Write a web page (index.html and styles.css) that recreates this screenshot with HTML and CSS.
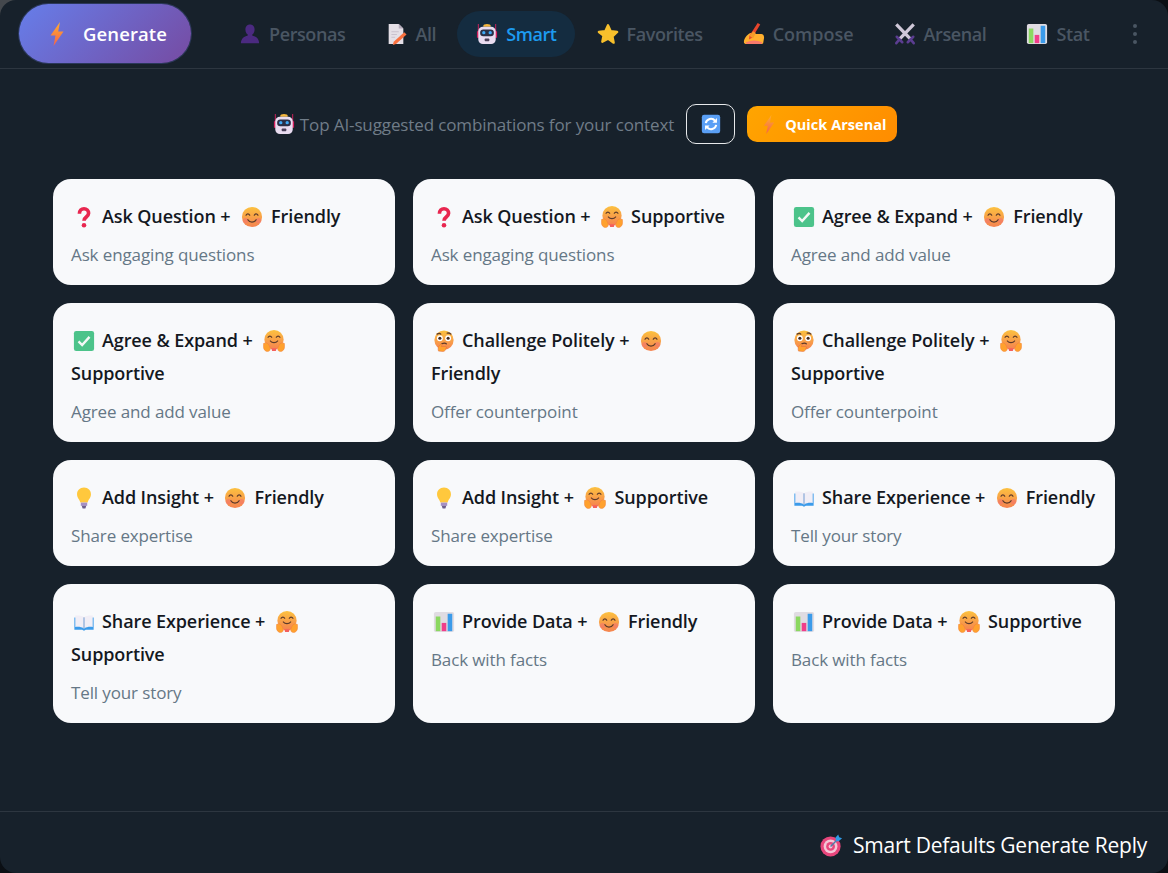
FILE: index.html
```html
<!DOCTYPE html>
<html lang="en">
<head>
<meta charset="utf-8">
<title>Smart</title>
<link rel="stylesheet" href="styles.css">
</head>
<body>
<svg class="defs" width="0" height="0" aria-hidden="true">
<defs>
<linearGradient id="gBolt" x1="0" y1="0" x2="0" y2="1"><stop offset="0" stop-color="#ffb02e"/><stop offset="1" stop-color="#f4604c"/></linearGradient>
<linearGradient id="gFace" x1="0" y1="0" x2="0" y2="1"><stop offset="0" stop-color="#fcc13f"/><stop offset="1" stop-color="#f58350"/></linearGradient>
<symbol id="bolt" viewBox="0 0 16 24"><path fill="url(#gBolt)" d="M11 0 1.500 13.500h5L4.500 24 14.500 9.500H9.200z"/></symbol>
<symbol id="person" viewBox="0 0 24 24"><path fill="#4b2a80" d="M12 1.500c3.300 0 5 2.500 5 5.500 0 2.600-1 4.400-2.400 5.400v1.400c3.600.8 6.900 2.600 7.400 8.200H2c.5-5.600 3.800-7.400 7.400-8.200v-1.400C8 11.400 7 9.600 7 7c0-3 1.700-5.500 5-5.500z"/></symbol>
<symbol id="memo" viewBox="0 0 24 24"><path fill="#e4dfe6" d="M4 1h11l5 5v17H4z"/><path fill="#b5abbb" d="m15 1 5 5h-5z"/><path fill="#c9c1cd" d="M7 9h8v1H7zm0 3h6v1H7zm0 3h4v1H7z"/><path fill="#f9703e" d="m21 10 2.500 2.500L12 23l-3.500 1 1-3.500z"/></symbol>
<symbol id="robot" viewBox="0 0 24 24"><path fill="#d6205f" d="M2 1h1v8H2zm19 0h1v8h-1z"/><path fill="#d6205f" d="M1 9h3v7H1zm19 0h3v7h-3z"/><path fill="#f6b73c" d="M8 3a4 2 0 0 1 8 0v1H8z"/><rect x="2.500" y="4" width="19" height="19" rx="5" fill="#e9dcf0"/><rect x="4.500" y="7" width="15" height="7.500" rx="3.500" fill="#2a2f45"/><circle cx="8.500" cy="10.500" r="1.800" fill="#3fa9f5"/><circle cx="15.500" cy="10.500" r="1.800" fill="#3fa9f5"/><rect x="9.500" y="17" width="5" height="2.800" rx=".8" fill="#4a3f58"/></symbol>
<symbol id="star" viewBox="0 0 24 24"><path fill="#f8c02c" stroke="#f8c02c" stroke-width="2.500" stroke-linejoin="round" d="m12 2.500 3 6.400 7 .9-5.100 4.800 1.300 6.900L12 17.100l-6.200 3.400 1.300-6.900L2 9.800l7-.9z"/></symbol>
<symbol id="hand" viewBox="0 0 24 24"><path fill="#ffb02e" d="M1 21c0-4 3-8 7-10l6 1h6c2 0 3 2 3 4l-1 6c-1 1-2 1-3 1H4c-2 0-3-1-3-2z"/><path fill="#f8796b" d="M3 21c3-1 6-2 9-2 3 0 6 1 9 2l-1 2H5c-1 0-2-1-2-2z"/><path fill="#e8452c" d="m16 0 2.800 1.700L10 16l-3.500 2 .5-4z"/><path fill="#f49a2a" d="m7 14 4-5 3 2-3 6z"/></symbol>
<symbol id="swords" viewBox="0 0 24 24"><path fill="none" stroke="#cfc8d8" stroke-width="3.600" d="m2.500 1.500 15 15.500M21.500 1.500 6.500 17"/><path fill="none" stroke="#5b3d91" stroke-width="2.800" stroke-linecap="round" d="m3 15 6 6M21 15l-6 6M5.500 18.500 2.500 22M18.500 18.500l3 3.500"/></symbol>
<symbol id="chart" viewBox="0 0 24 24"><rect x="1" y="1" width="22" height="22" rx="2" fill="#e0dce2"/><rect x="3" y="6" width="5" height="16" fill="#8bd860"/><rect x="9.500" y="13" width="5" height="9" fill="#f03e8a"/><rect x="16" y="3" width="5" height="19" fill="#3b9bea"/></symbol>
<symbol id="refresh" viewBox="0 0 24 24"><rect x="2" y="2" width="20" height="20" rx="2.500" fill="#5a9ff5"/><path fill="none" stroke="#fff" stroke-width="2.200" d="M6.300 11a5.800 5.800 0 0 1 10.200-2.500M17.700 13a5.800 5.800 0 0 1-10.200 2.500"/><path fill="#fff" d="M18.500 5.500v5h-5zM5.500 18.500v-5h5z"/></symbol>
<symbol id="question" viewBox="0 0 24 24"><path fill="none" stroke="#e8264f" stroke-width="4" d="M7 8.500C7 5 9.200 3 12 3s5 2 5 5c0 4-5 4-5 8"/><circle cx="12" cy="21" r="2.500" fill="#e8264f"/></symbol>
<symbol id="smile" viewBox="0 0 24 24"><circle cx="12" cy="12" r="11" fill="url(#gFace)"/><circle cx="5" cy="16" r="3" fill="#f4766c" opacity=".6"/><circle cx="19" cy="16" r="3" fill="#f4766c" opacity=".6"/><path fill="none" stroke="#5c3a2a" stroke-width="1.400" stroke-linecap="round" d="M5.500 10c1-2 3-2 4 0m5 0c1-2 3-2 4 0M7.500 15c2 3.500 7 3.500 9 0"/></symbol>
<symbol id="hug" viewBox="0 0 24 24"><circle cx="12" cy="10.500" r="10.500" fill="url(#gFace)"/><path fill="none" stroke="#5c3a2a" stroke-width="1.300" stroke-linecap="round" d="M5.500 8c1-1.800 3-1.800 4 0m5 0c1-1.800 3-1.800 4 0M8 12c2 2.500 6 2.500 8 0"/><path fill="#ffa12e" stroke="#f2803a" stroke-width=".5" d="M.5 15.500c0-1.500 1.500-1.500 2-.5l1-1c1 0 2.500 1.500 3.500 3.500l1 3c0 2-1.500 3-3 3-2.500 0-4.500-2.500-4.500-5zm23 0c0-1.500-1.500-1.500-2-.5l-1-1c-1 0-2.500 1.500-3.500 3.500l-1 3c0 2 1.500 3 3 3 2.500 0 4.500-2.500 4.500-5z"/><path fill="#f4605c" d="M9 20h6l-1 3h-4z"/></symbol>
<symbol id="check" viewBox="0 0 24 24"><rect x="1" y="1" width="22" height="22" rx="2.500" fill="#4cc38a"/><path fill="none" stroke="#f3f8f6" stroke-width="2.600" d="m6 12.500 4 4 8-9"/></symbol>
<symbol id="think" viewBox="0 0 24 24"><circle cx="12" cy="11" r="10.500" fill="url(#gFace)"/><circle cx="7.500" cy="9" r="3.200" fill="#fff"/><circle cx="16.500" cy="9" r="3.200" fill="#fff"/><circle cx="7.500" cy="9" r="1.700" fill="#40281f"/><circle cx="16.500" cy="9" r="1.700" fill="#40281f"/><path fill="none" stroke="#5c3a2a" stroke-width="1.400" stroke-linecap="round" d="M4.500 4.500c1.500-1 3-1 4 0m7-1c1.500-.5 3 0 4 1M9.500 15c2-.8 4-.8 5 0"/><path fill="#ffa12e" stroke="#e8703c" stroke-width=".6" d="M6 23c-1-3 0-5 1-6l2-2 1 1-1 2h5c1 0 1 2 0 2 0 2-1 3-3 3.500z"/></symbol>
<symbol id="bulb" viewBox="0 0 24 24"><path fill="#ffc83d" d="M12 .5c4.600 0 7.600 3.200 7.600 7.300 0 4-3 5.700-3.600 9.200H8c-.6-3.500-3.600-5.200-3.600-9.200C4.400 3.700 7.400.5 12 .5z"/><rect x="8.500" y="17" width="7" height="3.500" fill="#a58fc4"/><path fill="#6d5f8c" d="M9.500 20.500h5l-1 3h-3z"/></symbol>
<symbol id="book" viewBox="0 0 24 24"><path fill="#3b9bea" d="M1.500 7h21v13.500H14l-2 1-2-1H1.500z"/><path fill="#f1eef6" d="M2.500 5c3.500-.5 7 0 9 1.500V19c-2-1.500-5.500-2-9-1.500zm19 0c-3.500-.5-7 0-9 1.500V19c2-1.500 5.500-2 9-1.500z"/><path fill="#c9c2d6" d="M11.500 6.500h1V19h-1z"/></symbol>
<symbol id="target" viewBox="0 0 24 24"><circle cx="11" cy="13" r="10.500" fill="#e8467c"/><circle cx="11" cy="13" r="7.200" fill="#f4c6d6"/><circle cx="11" cy="13" r="4.600" fill="#e8467c"/><circle cx="11" cy="13" r="2" fill="#f4c6d6"/><path stroke="#4c7ea8" stroke-width="1.500" d="m11 13 9-9"/><path fill="#2f9ae6" d="m16 4 3-3.500 1 3 3 1-3.500 3H17z"/></symbol>
</defs>
</svg>

<div class="app">
  <header class="topbar">
    <button class="generate"><svg class="ico-bolt"><use href="#bolt"/></svg><span>Generate</span></button>
    <nav class="tabs">
      <a class="tab"><svg class="ico"><use href="#person"/></svg><span>Personas</span></a>
      <a class="tab"><svg class="ico"><use href="#memo"/></svg><span>All</span></a>
      <a class="tab active"><svg class="ico"><use href="#robot"/></svg><span>Smart</span></a>
      <a class="tab"><svg class="ico"><use href="#star"/></svg><span>Favorites</span></a>
      <a class="tab tab-wide"><svg class="ico"><use href="#hand"/></svg><span>Compose</span></a>
      <a class="tab"><svg class="ico"><use href="#swords"/></svg><span>Arsenal</span></a>
      <a class="tab"><svg class="ico"><use href="#chart"/></svg><span>Stat</span></a>
    </nav>
    <div class="kebab"><i></i><i></i><i></i></div>
  </header>

  <main class="content">
    <div class="hint">
      <svg class="ico"><use href="#robot"/></svg>
      <span class="hint-text">Top AI-suggested combinations for your context</span>
      <button class="refresh"><svg class="ico"><use href="#refresh"/></svg></button>
      <button class="quick"><svg class="ico-small"><use href="#bolt"/></svg><span>Quick Arsenal</span></button>
    </div>

    <section class="cards">
      <article class="card"><h3><svg class="em"><use href="#question"/></svg>Ask Question + <svg class="em"><use href="#smile"/></svg>Friendly</h3><p>Ask engaging questions</p></article>
      <article class="card"><h3><svg class="em"><use href="#question"/></svg>Ask Question + <svg class="em"><use href="#hug"/></svg>Supportive</h3><p>Ask engaging questions</p></article>
      <article class="card"><h3><svg class="em"><use href="#check"/></svg>Agree &amp; Expand + <svg class="em"><use href="#smile"/></svg>Friendly</h3><p>Agree and add value</p></article>
      <article class="card"><h3><svg class="em"><use href="#check"/></svg>Agree &amp; Expand + <svg class="em"><use href="#hug"/></svg>Supportive</h3><p>Agree and add value</p></article>
      <article class="card"><h3><svg class="em"><use href="#think"/></svg>Challenge Politely + <svg class="em"><use href="#smile"/></svg>Friendly</h3><p>Offer counterpoint</p></article>
      <article class="card"><h3><svg class="em"><use href="#think"/></svg>Challenge Politely + <svg class="em"><use href="#hug"/></svg>Supportive</h3><p>Offer counterpoint</p></article>
      <article class="card"><h3><svg class="em"><use href="#bulb"/></svg>Add Insight + <svg class="em"><use href="#smile"/></svg>Friendly</h3><p>Share expertise</p></article>
      <article class="card"><h3><svg class="em"><use href="#bulb"/></svg>Add Insight + <svg class="em"><use href="#hug"/></svg>Supportive</h3><p>Share expertise</p></article>
      <article class="card"><h3><svg class="em"><use href="#book"/></svg>Share Experience + <svg class="em"><use href="#smile"/></svg>Friendly</h3><p>Tell your story</p></article>
      <article class="card"><h3><svg class="em"><use href="#book"/></svg>Share Experience + <svg class="em"><use href="#hug"/></svg>Supportive</h3><p>Tell your story</p></article>
      <article class="card"><h3><svg class="em"><use href="#chart"/></svg>Provide Data + <svg class="em"><use href="#smile"/></svg>Friendly</h3><p>Back with facts</p></article>
      <article class="card"><h3><svg class="em"><use href="#chart"/></svg>Provide Data + <svg class="em"><use href="#hug"/></svg>Supportive</h3><p>Back with facts</p></article>
    </section>
  </main>

  <footer class="footer">
    <svg class="ico-target"><use href="#target"/></svg><span>Smart Defaults Generate Reply</span>
  </footer>
</div>
</body>
</html>
```
FILE: styles.css
```css
* { box-sizing: border-box; }
html, body { margin: 0; height: 100%; }
body { background: radial-gradient(circle at 0 0, #44484d 0, #44484d 18px, transparent 18px), #0b0f14; font-family: "Open Sans", "Noto Sans", sans-serif; overflow: hidden; }
.defs { display: block; height: 0; }
.app { height: 873px; width: 1168px; background: #17212b; border-radius: 16px; display: flex; flex-direction: column; overflow: hidden; }

.topbar { height: 69px; flex: none; display: flex; align-items: center; padding: 0 20px 1px 19px; border-bottom: 1px solid #2d3640; }
.generate { width: 172px; height: 59px; border: 0; border-radius: 30px; background: linear-gradient(135deg, #667eea, #764ba2); color: #fff; font: 600 18.5px "Open Sans", sans-serif; letter-spacing: .1px; display: flex; align-items: center; padding: 0 0 0 30px; gap: 18px; box-shadow: 0 0 0 1px rgba(102,126,234,.25); margin-right: 29px; flex: none; }
.ico { width: 22px; height: 22px; flex: none; display: block; }
.ico-bolt { width: 16px; height: 24px; flex: none; }

.tabs { display: flex; align-items: center; flex: 1; gap: 3px; }
.tab { height: 46px; display: flex; align-items: center; gap: 8px; color: #4a5663; font-size: 18px; font-weight: 600; letter-spacing: -.4px; padding: 0 18px 0 19px; border-radius: 23px; white-space: nowrap; }
.tab.active { color: #1d9bf0; background: #142c40; }
.tab-wide { letter-spacing: 0; }
.kebab { display: flex; flex-direction: column; gap: 4px; margin-right: 11px; }
.kebab i { width: 4px; height: 4px; border-radius: 50%; background: #4a5663; display: block; }

.content { flex: 1; padding: 0 53px; display: flex; flex-direction: column; }
.hint { height: 110px; flex: none; display: flex; align-items: center; justify-content: center; padding-left: 2px; color: #707c88; font-size: 17px; letter-spacing: -.12px; }
.hint-text { margin-left: 5px; margin-right: 12px; }
.refresh { width: 49px; height: 40px; border: 1px solid #e7e9eb; border-radius: 10px; background: transparent; display: flex; align-items: center; justify-content: center; padding: 0; margin-right: 12px; }
.quick { width: 150px; height: 36px; border: 0; border-radius: 10px; background: linear-gradient(135deg, #ffa500, #ff8c00); color: #fff; font: 700 14.5px "Open Sans", sans-serif; letter-spacing: .05px; display: flex; align-items: center; padding: 0 0 0 14px; gap: 8px; }
.ico-small { width: 16px; height: 19px; flex: none; }

.cards { display: grid; grid-template-columns: repeat(3, 342px); gap: 18px; align-items: stretch; }
.card { background: #f8f9fb; border-radius: 18px; padding: 21px 18px 17px; color: #14181f; }
.card h3 { margin: 0 0 8px; font-size: 18px; font-weight: 600; line-height: 33px; letter-spacing: -.1px; }
.card p { margin: 0; font-size: 17px; line-height: 27px; color: #657786; letter-spacing: -.12px; }
.em { width: 22px; height: 22px; vertical-align: -5px; margin: 0 7px 0 2px; display: inline-block; }
.em:nth-of-type(2) { margin: 0 8px 0 6px; }

.footer { height: 62px; flex: none; border-top: 1px solid #2d3640; display: flex; align-items: center; justify-content: flex-end; padding: 5px 21px 0 0; gap: 10px; color: #fff; font-size: 21px; letter-spacing: -.25px; }
.ico-target { width: 23px; height: 23px; flex: none; }
```
